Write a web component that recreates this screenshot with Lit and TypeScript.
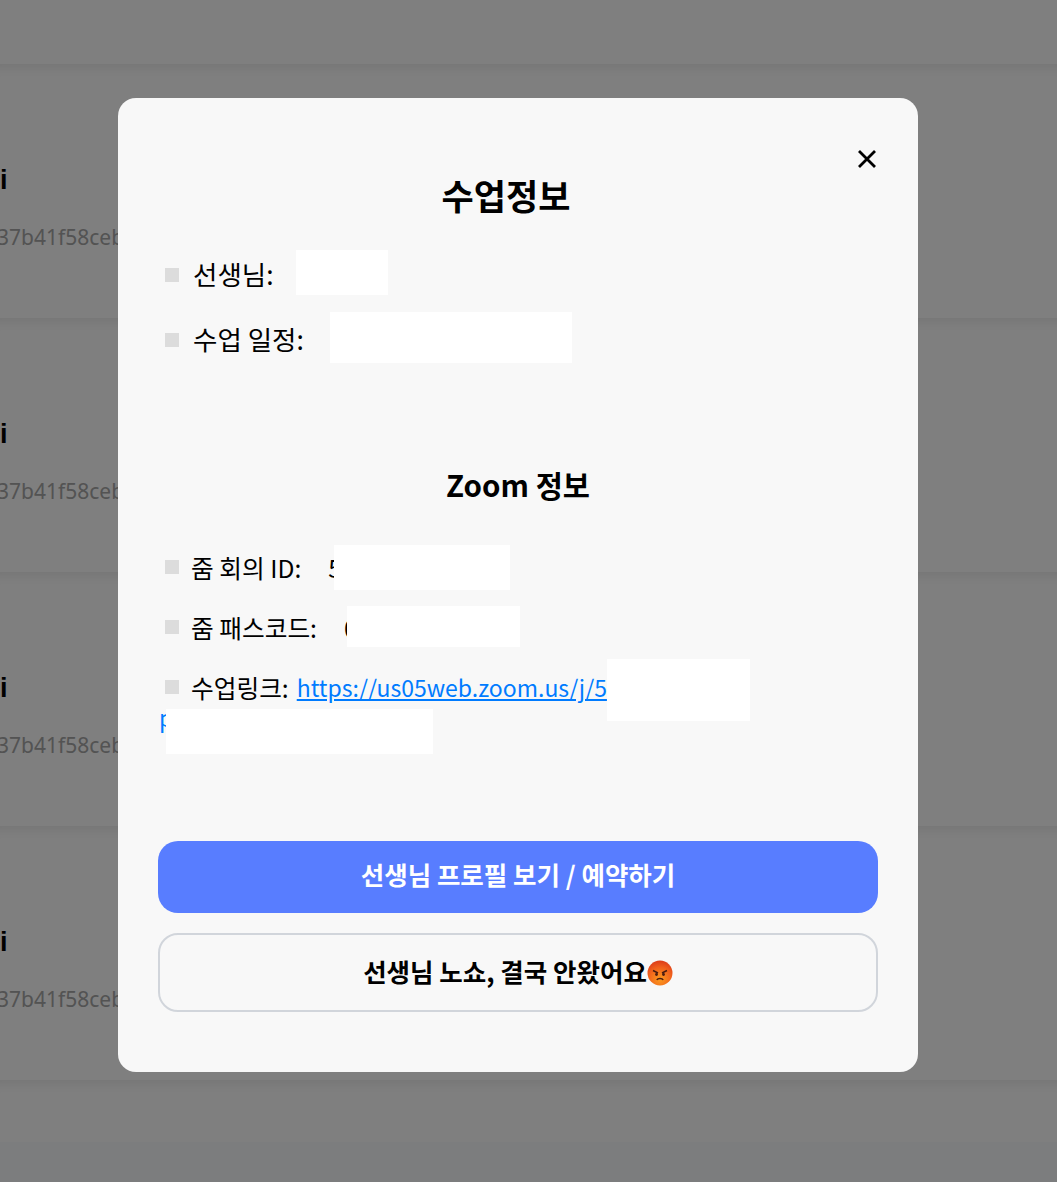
import { LitElement, html, css } from "lit"
import { customElement } from "lit/decorators.js"

const CARDS = [0, 1, 2, 3]

@customElement("app-root")
export class AppRoot extends LitElement {
  static styles = css`
    :host {
      display: block;
      position: relative;
      height: 1182px;
      overflow: hidden;
      background: #fff;
      font-family: "Noto Sans CJK KR", "Noto Sans", sans-serif;
      color: #000;
    }
    * {
      box-sizing: border-box;
    }
    .top {
      height: 64px;
    }
    .card {
      height: 254px;
      padding-top: 104px;
      box-shadow: inset 0 14px 14px -12px rgba(0, 0, 0, 0.1);
      overflow: hidden;
    }
    .name {
      height: 24px;
      font-family: "Liberation Sans", sans-serif;
      font-size: 27px;
      font-weight: 700;
      line-height: 24px;
    }
    .uid {
      margin: 31px 0 0 -3px;
      font-family: "Noto Sans", sans-serif;
      font-size: 21px;
      line-height: 28px;
      color: #a6a6a6;
      white-space: nowrap;
    }
    .rest {
      height: 62px;
      box-shadow: inset 0 14px 14px -12px rgba(0, 0, 0, 0.1);
    }
    .foot {
      height: 40px;
      background: #f8fafc;
    }
    .overlay {
      position: absolute;
      inset: 0;
      padding: 98px 0 0 118px;
      background: rgba(0, 0, 0, 0.5);
    }
    .modal {
      position: relative;
      width: 800px;
      height: 974px;
      padding: 76px 40px 60px;
      border-radius: 18px;
      background: #f8f8f8;
    }
    .close {
      position: absolute;
      top: 52px;
      right: 42px;
      display: block;
      width: 18px;
      height: 18px;
    }
    h2 {
      margin: 0 24px 0 0;
      font-size: 35px;
      font-weight: 700;
      line-height: 42px;
      text-align: center;
    }
    h3 {
      margin: 0;
      font-size: 29.5px;
      font-weight: 700;
      line-height: 40px;
      text-align: center;
    }
    .big {
      margin-top: 41px;
      height: 129px;
    }
    .row {
      position: relative;
      display: flex;
      align-items: center;
      height: 36px;
      font-size: 26.5px;
      line-height: 36px;
      white-space: nowrap;
    }
    .big .row {
      align-items: flex-start;
      padding-left: 35px;
      line-height: 34px;
    }
    .big .row + .row {
      margin-top: 29px;
    }
    .big .row::before,
    .small .row::before {
      content: "";
      position: absolute;
      left: 7px;
      top: 11px;
      width: 14px;
      height: 14px;
      background: #dcdcdc;
    }
    .zoom {
      margin-top: 78px;
    }
    .small {
      margin-top: 45px;
      height: 292px;
    }
    .small .row {
      padding-left: 33px;
      font-size: 24.7px;
    }
    .small .row + .row {
      margin-top: 24px;
    }
    .value {
      margin-left: 27px;
    }
    a {
      color: #007bff;
      margin-left: 8px;
      font-size: 23px;
      text-decoration: underline;
    }
    .wrapped {
      position: absolute;
      left: 1px;
      top: 30px;
      margin: 0;
    }
    .mask {
      position: absolute;
      background: #fff;
    }
    .btn {
      display: flex;
      align-items: center;
      justify-content: center;
      width: 720px;
      font-size: 25.5px;
      font-weight: 700;
      border-radius: 20px;
    }
    .primary {
      height: 72px;
      padding-bottom: 8px;
      color: #fff;
      background: #587dff;
    }
    .secondary {
      height: 79px;
      margin-top: 20px;
      padding-bottom: 4px;
      border: 2px solid #d1d5db;
    }
    .secondary svg {
      display: block;
      width: 26px;
      height: 26px;
      margin-top: 4px;
    }
  `

  render() {
    return html`
      <div class="top"></div>
      ${CARDS.map(
        () => html`
          <div class="card">
            <div class="name">i</div>
            <div class="uid">37b41f58ceb</div>
          </div>
        `
      )}
      <div class="rest"></div>
      <div class="foot"></div>

      <div class="overlay">
        <div class="modal">
          <svg class="close" viewBox="0 0 18 18" fill="none" stroke="#000" stroke-width="2.8">
            <path d="M1 1l16 16M17 1L1 17" />
          </svg>

          <h2>수업정보</h2>
          <div class="big">
            <div class="row">
              <span>선생님:</span>
              <span class="mask" style="left:138px;top:-7px;width:92px;height:45px"></span>
            </div>
            <div class="row">
              <span>수업 일정:</span>
              <span class="mask" style="left:172px;top:-10px;width:242px;height:51px"></span>
            </div>
          </div>

          <h3 class="zoom">Zoom 정보</h3>
          <div class="small">
            <div class="row">
              <span>줌 회의 ID:</span><span class="value">5</span>
              <span class="mask" style="left:176px;top:-4px;width:176px;height:45px"></span>
            </div>
            <div class="row">
              <span>줌 패스코드:</span><span class="value">0</span>
              <span class="mask" style="left:189px;top:-3px;width:173px;height:41px"></span>
            </div>
            <div class="row">
              <span>수업링크:</span>
              <a href="#">https://us05web.zoom.us/j/5</a>
              <a class="wrapped" href="#">p</a>
              <span class="mask" style="left:449px;top:-10px;width:143px;height:62px"></span>
              <span class="mask" style="left:8px;top:40px;width:267px;height:45px"></span>
            </div>
          </div>

          <div class="btn primary">선생님 프로필 보기 / 예약하기</div>
          <div class="btn secondary">
            선생님 노쇼, 결국 안왔어요
            <svg viewBox="0 0 26 26">
              <defs>
                <radialGradient id="angry" cx="0.5" cy="0.75" r="0.8">
                  <stop offset="0" stop-color="#fb9a1e" />
                  <stop offset="0.6" stop-color="#f0601c" />
                  <stop offset="1" stop-color="#d8351a" />
                </radialGradient>
              </defs>
              <circle cx="13" cy="13" r="12.5" fill="url(#angry)" />
              <path d="M6 10.5l5 2.5M20 10.5l-5 2.5" stroke="#4a1c10" stroke-width="1.5" fill="none" />
              <circle cx="9.5" cy="14.5" r="1.4" fill="#4a1c10" />
              <circle cx="16.5" cy="14.5" r="1.4" fill="#4a1c10" />
              <path d="M9.8 20c1-2 5.4-2 6.4 0" stroke="#4a1c10" stroke-width="1.5" fill="none" />
            </svg>
          </div>
        </div>
      </div>
    `
  }
}
